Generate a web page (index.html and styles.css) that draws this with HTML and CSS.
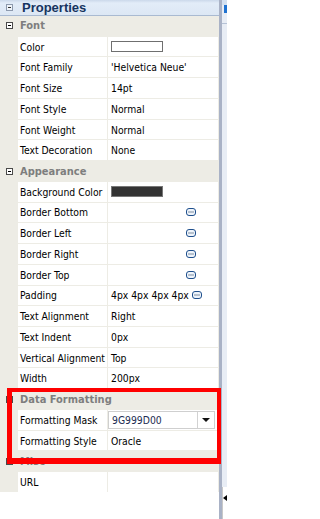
FILE: index.html
```html
<!DOCTYPE html>
<html>
<head>
<meta charset="utf-8">
<link rel="stylesheet" href="styles.css">
</head>
<body>
<div class="frame">
  <div class="panel">
    <div class="hdr">
      <span class="hbox"><span class="minus"></span></span>
      <span class="htitle">Properties</span>
    </div>
    <div class="sheet">
      <div class="sec"><span class="sbox"><span class="minus"></span></span><span class="stitle">Font</span></div>
      <div class="row"><span class="gut"></span><span class="lab">Color</span><span class="val"><span class="swatch light"></span></span></div>
      <div class="row"><span class="gut"></span><span class="lab">Font Family</span><span class="val">'Helvetica Neue'</span></div>
      <div class="row"><span class="gut"></span><span class="lab">Font Size</span><span class="val">14pt</span></div>
      <div class="row"><span class="gut"></span><span class="lab">Font Style</span><span class="val">Normal</span></div>
      <div class="row"><span class="gut"></span><span class="lab">Font Weight</span><span class="val">Normal</span></div>
      <div class="row"><span class="gut"></span><span class="lab">Text Decoration</span><span class="val">None</span></div>

      <div class="sec"><span class="sbox"><span class="minus"></span></span><span class="stitle">Appearance</span></div>
      <div class="row"><span class="gut"></span><span class="lab">Background Color</span><span class="val"><span class="swatch dark"></span></span></div>
      <div class="row"><span class="gut"></span><span class="lab">Border Bottom</span><span class="val"><span class="vtext"></span><svg class="ell" width="10" height="8" viewBox="0 0 10 8"><rect x="0.5" y="0.5" width="9" height="7" rx="2.5" fill="#eef4fb" stroke="#1f4f8c"/><rect x="2.5" y="3.5" width="1" height="1" fill="#10284a"/><rect x="4.5" y="3.5" width="1" height="1" fill="#10284a"/><rect x="6.5" y="3.5" width="1" height="1" fill="#10284a"/></svg></span></div>
      <div class="row"><span class="gut"></span><span class="lab">Border Left</span><span class="val"><span class="vtext"></span><svg class="ell" width="10" height="8" viewBox="0 0 10 8"><rect x="0.5" y="0.5" width="9" height="7" rx="2.5" fill="#eef4fb" stroke="#1f4f8c"/><rect x="2.5" y="3.5" width="1" height="1" fill="#10284a"/><rect x="4.5" y="3.5" width="1" height="1" fill="#10284a"/><rect x="6.5" y="3.5" width="1" height="1" fill="#10284a"/></svg></span></div>
      <div class="row"><span class="gut"></span><span class="lab">Border Right</span><span class="val"><span class="vtext"></span><svg class="ell" width="10" height="8" viewBox="0 0 10 8"><rect x="0.5" y="0.5" width="9" height="7" rx="2.5" fill="#eef4fb" stroke="#1f4f8c"/><rect x="2.5" y="3.5" width="1" height="1" fill="#10284a"/><rect x="4.5" y="3.5" width="1" height="1" fill="#10284a"/><rect x="6.5" y="3.5" width="1" height="1" fill="#10284a"/></svg></span></div>
      <div class="row"><span class="gut"></span><span class="lab">Border Top</span><span class="val"><span class="vtext"></span><svg class="ell" width="10" height="8" viewBox="0 0 10 8"><rect x="0.5" y="0.5" width="9" height="7" rx="2.5" fill="#eef4fb" stroke="#1f4f8c"/><rect x="2.5" y="3.5" width="1" height="1" fill="#10284a"/><rect x="4.5" y="3.5" width="1" height="1" fill="#10284a"/><rect x="6.5" y="3.5" width="1" height="1" fill="#10284a"/></svg></span></div>
      <div class="row"><span class="gut"></span><span class="lab">Padding</span><span class="val"><span class="vtext">4px 4px 4px 4px</span><svg class="ell" width="10" height="8" viewBox="0 0 10 8"><rect x="0.5" y="0.5" width="9" height="7" rx="2.5" fill="#eef4fb" stroke="#1f4f8c"/><rect x="2.5" y="3.5" width="1" height="1" fill="#10284a"/><rect x="4.5" y="3.5" width="1" height="1" fill="#10284a"/><rect x="6.5" y="3.5" width="1" height="1" fill="#10284a"/></svg></span></div>
      <div class="row"><span class="gut"></span><span class="lab">Text Alignment</span><span class="val">Right</span></div>
      <div class="row"><span class="gut"></span><span class="lab">Text Indent</span><span class="val">0px</span></div>
      <div class="row"><span class="gut"></span><span class="lab">Vertical Alignment</span><span class="val">Top</span></div>
      <div class="row"><span class="gut"></span><span class="lab">Width</span><span class="val">200px</span></div>

      <div class="sec"><span class="sbox"><span class="minus"></span></span><span class="stitle">Data Formatting</span></div>
      <div class="row"><span class="gut"></span><span class="lab">Formatting Mask</span><span class="val sel"><span class="combo"><span class="ctext">9G999D00</span><span class="cbtn"><span class="tri"></span></span></span></span></div>
      <div class="row"><span class="gut"></span><span class="lab">Formatting Style</span><span class="val">Oracle</span></div>

      <div class="sec"><span class="sbox"><span class="minus"></span></span><span class="stitle">Misc</span></div>
      <div class="row"><span class="gut"></span><span class="lab">URL</span><span class="val"></span></div>
    </div>
    <div class="blank"></div>
    <div class="mark"></div>
  </div>
  <div class="splitter"></div>
  <div class="side">
    <div class="side-top"></div>
    <div class="side-blue"></div>
    <div class="side-fill"></div>
    <div class="side-tab"><span class="larr"></span></div>
  </div>
</div>
</body>
</html>
```

FILE: styles.css
```css
* { box-sizing: border-box; }
html, body { margin: 0; padding: 0; }
body {
  width: 227px;
  height: 519px;
  overflow: hidden;
  background: #ffffff;
  font-family: "DejaVu Sans Condensed", "DejaVu Sans", sans-serif;
  font-stretch: condensed;
  font-size: 10.3px;
  color: #000000;
}
.frame {
  display: flex;
  height: 519px;
}
.panel {
  position: relative;
  width: 219px;
  display: flex;
  flex-direction: column;
}
.hdr {
  height: 16px;
  display: flex;
  align-items: center;
  background: linear-gradient(#cbd8ea 0, #e2ecf8 3px, #dce7f4 100%);
  border-bottom: 1px solid #a9bad1;
}
.hbox {
  width: 7px;
  height: 7px;
  margin-left: 6px;
  border: 1px solid #8d9aae;
  background: #eef3f9;
  display: flex;
  align-items: center;
  justify-content: center;
}
.minus {
  width: 3px;
  height: 1px;
  background: #333;
}
.htitle {
  margin-left: 9px;
  font-family: "Liberation Sans", Arial, sans-serif;
  font-stretch: normal;
  font-weight: bold;
  font-size: 13px;
  color: #163460;
}
.sheet {
  background: #edece5;
  padding-right: 1px;
  display: flex;
  flex-direction: column;
  gap: 1px;
}
.sec, .row {
  height: 19.74px;
  display: flex;
  align-items: stretch;
}
.sec { align-items: center; }
.sbox {
  width: 7px;
  height: 7px;
  margin-left: 6px;
  border: 1px solid #4a4a4a;
  background: #ffffff;
  display: flex;
  align-items: center;
  justify-content: center;
}
.sbox .minus { background: #000; }
.stitle {
  margin-left: 7px;
  font-weight: bold;
  font-size: 11px;
  color: #7e7e7e;
}
.gut { width: 18px; }
.lab {
  width: 89px;
  margin-right: 1px;
  background: #ffffff;
  padding-left: 2px;
  display: flex;
  align-items: center;
  white-space: nowrap;
}
.val {
  width: 110px;
  background: #ffffff;
  padding-left: 3px;
  display: flex;
  align-items: center;
  white-space: nowrap;
}
.swatch {
  width: 52px;
  height: 11px;
  border: 1px solid #6f6f6f;
}
.swatch.light { background: #ffffff; }
.swatch.dark { background: #333333; border-color: #777777; }
.vtext {
  min-width: 72px;
  margin-right: 3px;
}
.ell { display: block; }
.val.sel { padding-left: 0; }
.combo {
  width: 107px;
  height: 18px;
  border: 1px solid #cfcfcf;
  display: flex;
  align-items: stretch;
}
.ctext {
  flex: 1;
  padding-left: 3px;
  display: flex;
  align-items: center;
  color: #1c2d52;
}
.cbtn {
  width: 17px;
  border-left: 1px solid #d2d2d2;
  display: flex;
  align-items: center;
  justify-content: center;
}
.tri {
  width: 0;
  height: 0;
  border-left: 4px solid transparent;
  border-right: 4px solid transparent;
  border-top: 4px solid #111;
}
.blank {
  flex: 1;
  background: #ffffff;
}
.mark {
  position: absolute;
  left: 7px;
  top: 388px;
  width: 214px;
  height: 76px;
  border-style: solid;
  border-color: #ff0000;
  border-width: 4px 4px 6px 5px;
}
.splitter {
  width: 3px;
  background: #a9b2c6;
}
.side {
  width: 5px;
  display: flex;
  flex-direction: column;
  background: #e8edf5;
}
.side-top {
  height: 5px;
  background: #d3e0f0;
}
.side-blue {
  height: 8px;
  margin-left: 2px;
  background: #1f72d0;
}
.side-fill {
  flex: 1;
  border-top: 1px solid #b5c2d6;
  margin-top: 10px;
}
.side-tab {
  height: 32px;
  background: #ffffff;
  border-left: 1px solid #c8c8c8;
  padding-top: 8px;
}
.larr {
  display: block;
  width: 0;
  height: 0;
  border-top: 3px solid transparent;
  border-bottom: 3px solid transparent;
  border-right: 4px solid #000;
}
```
